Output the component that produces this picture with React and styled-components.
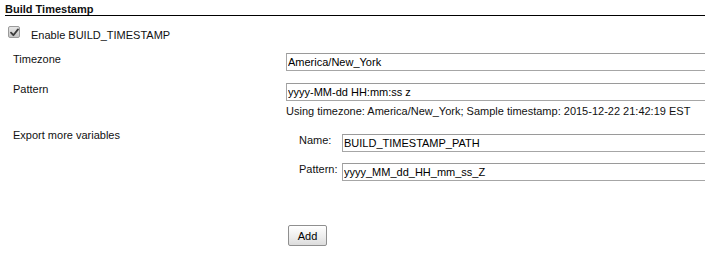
import React from "react";
import styled, { createGlobalStyle } from "styled-components";

const Global = createGlobalStyle`
  html, body { margin: 0; padding: 0; background: #fff; overflow: hidden; }
  body { font-family: "Liberation Sans", Arial, sans-serif; font-size: 11px; color: #111; }
`;

const Page = styled.div`
  width: 730px;
  padding-left: 5px;
  box-sizing: border-box;
`;

const SectionHeader = styled.div`
  font-weight: bold;
  padding-top: 3px;
  line-height: 12px;
  border-bottom: 1px solid #000;
`;

const CheckRow = styled.label`
  display: flex;
  align-items: flex-start;
  margin-top: 10px;
  padding-left: 3px;
`;

const CheckBox = styled.span`
  width: 12px;
  height: 12px;
  box-sizing: border-box;
  border: 1px solid #9a9a9a;
  border-radius: 2px;
  background: linear-gradient(#e6e6e6, #c4c4c4);
  display: flex;
  align-items: center;
  justify-content: center;
`;

const CheckText = styled.span`
  margin-left: 11px;
  padding-top: 3px;
  line-height: 13px;
`;

const Form = styled.div`
  display: grid;
  grid-template-columns: 281px 1fr;
  row-gap: 11px;
  margin-top: 11px;
`;

const Label = styled.div`
  padding-left: 8px;
  line-height: 13px;
`;

const Field = styled.div`
  display: flex;
  flex-direction: column;
  align-items: flex-start;
  padding-bottom: ${(p) => p.$pad || 0}px;
`;

const TextInput = styled.input`
  width: 100%;
  height: 18px;
  box-sizing: border-box;
  border: 1px solid #a6a6a6;
  border-top-color: #9a9a9a;
  padding: 0 1px;
  margin: 0;
  font-family: "Liberation Sans", Arial, sans-serif;
  font-size: 11px;
  color: #000;
  background: #fff;
  outline: none;
`;

const Hint = styled.div`
  margin-top: 4px;
  line-height: 13px;
`;

const VarTable = styled.div`
  display: grid;
  grid-template-columns: 56px 1fr;
  row-gap: 11px;
  width: 100%;
  margin-top: 5px;
`;

const VarLabel = styled.div`
  padding-left: 13px;
  line-height: 13px;
`;

const AddButton = styled.button`
  margin: 44px 0 0 2px;
  width: 39px;
  height: 21px;
  box-sizing: border-box;
  border: 1px solid #8f8f8f;
  border-radius: 2px;
  background: linear-gradient(#ffffff, #ececec 60%, #dcdcdc);
  font-family: "Liberation Sans", Arial, sans-serif;
  font-size: 11px;
  color: #000;
  padding: 0;
`;

export default function App() {
  return (
    <Page>
      <Global />
      <SectionHeader>Build Timestamp</SectionHeader>
      <CheckRow>
        <CheckBox>
          <svg width="9" height="9" viewBox="0 0 9 9">
            <path d="M1 4.6 L3.4 7.2 L8 1.4" fill="none" stroke="#3a3a3a" strokeWidth="1.8" strokeLinecap="round" strokeLinejoin="round" />
          </svg>
        </CheckBox>
        <CheckText>Enable BUILD_TIMESTAMP</CheckText>
      </CheckRow>
      <Form>
        <Label>Timezone</Label>
        <Field $pad={1}>
          <TextInput defaultValue="America/New_York" />
        </Field>
        <Label>Pattern</Label>
        <Field>
          <TextInput defaultValue="yyyy-MM-dd HH:mm:ss z" />
          <Hint>Using timezone: America/New_York; Sample timestamp: 2015-12-22 21:42:19 EST</Hint>
        </Field>
        <Label>Export more variables</Label>
        <Field>
          <VarTable>
            <VarLabel>Name:</VarLabel>
            <TextInput defaultValue="BUILD_TIMESTAMP_PATH" />
            <VarLabel>Pattern:</VarLabel>
            <TextInput defaultValue="yyyy_MM_dd_HH_mm_ss_Z" />
          </VarTable>
          <AddButton>Add</AddButton>
        </Field>
      </Form>
    </Page>
  );
}
